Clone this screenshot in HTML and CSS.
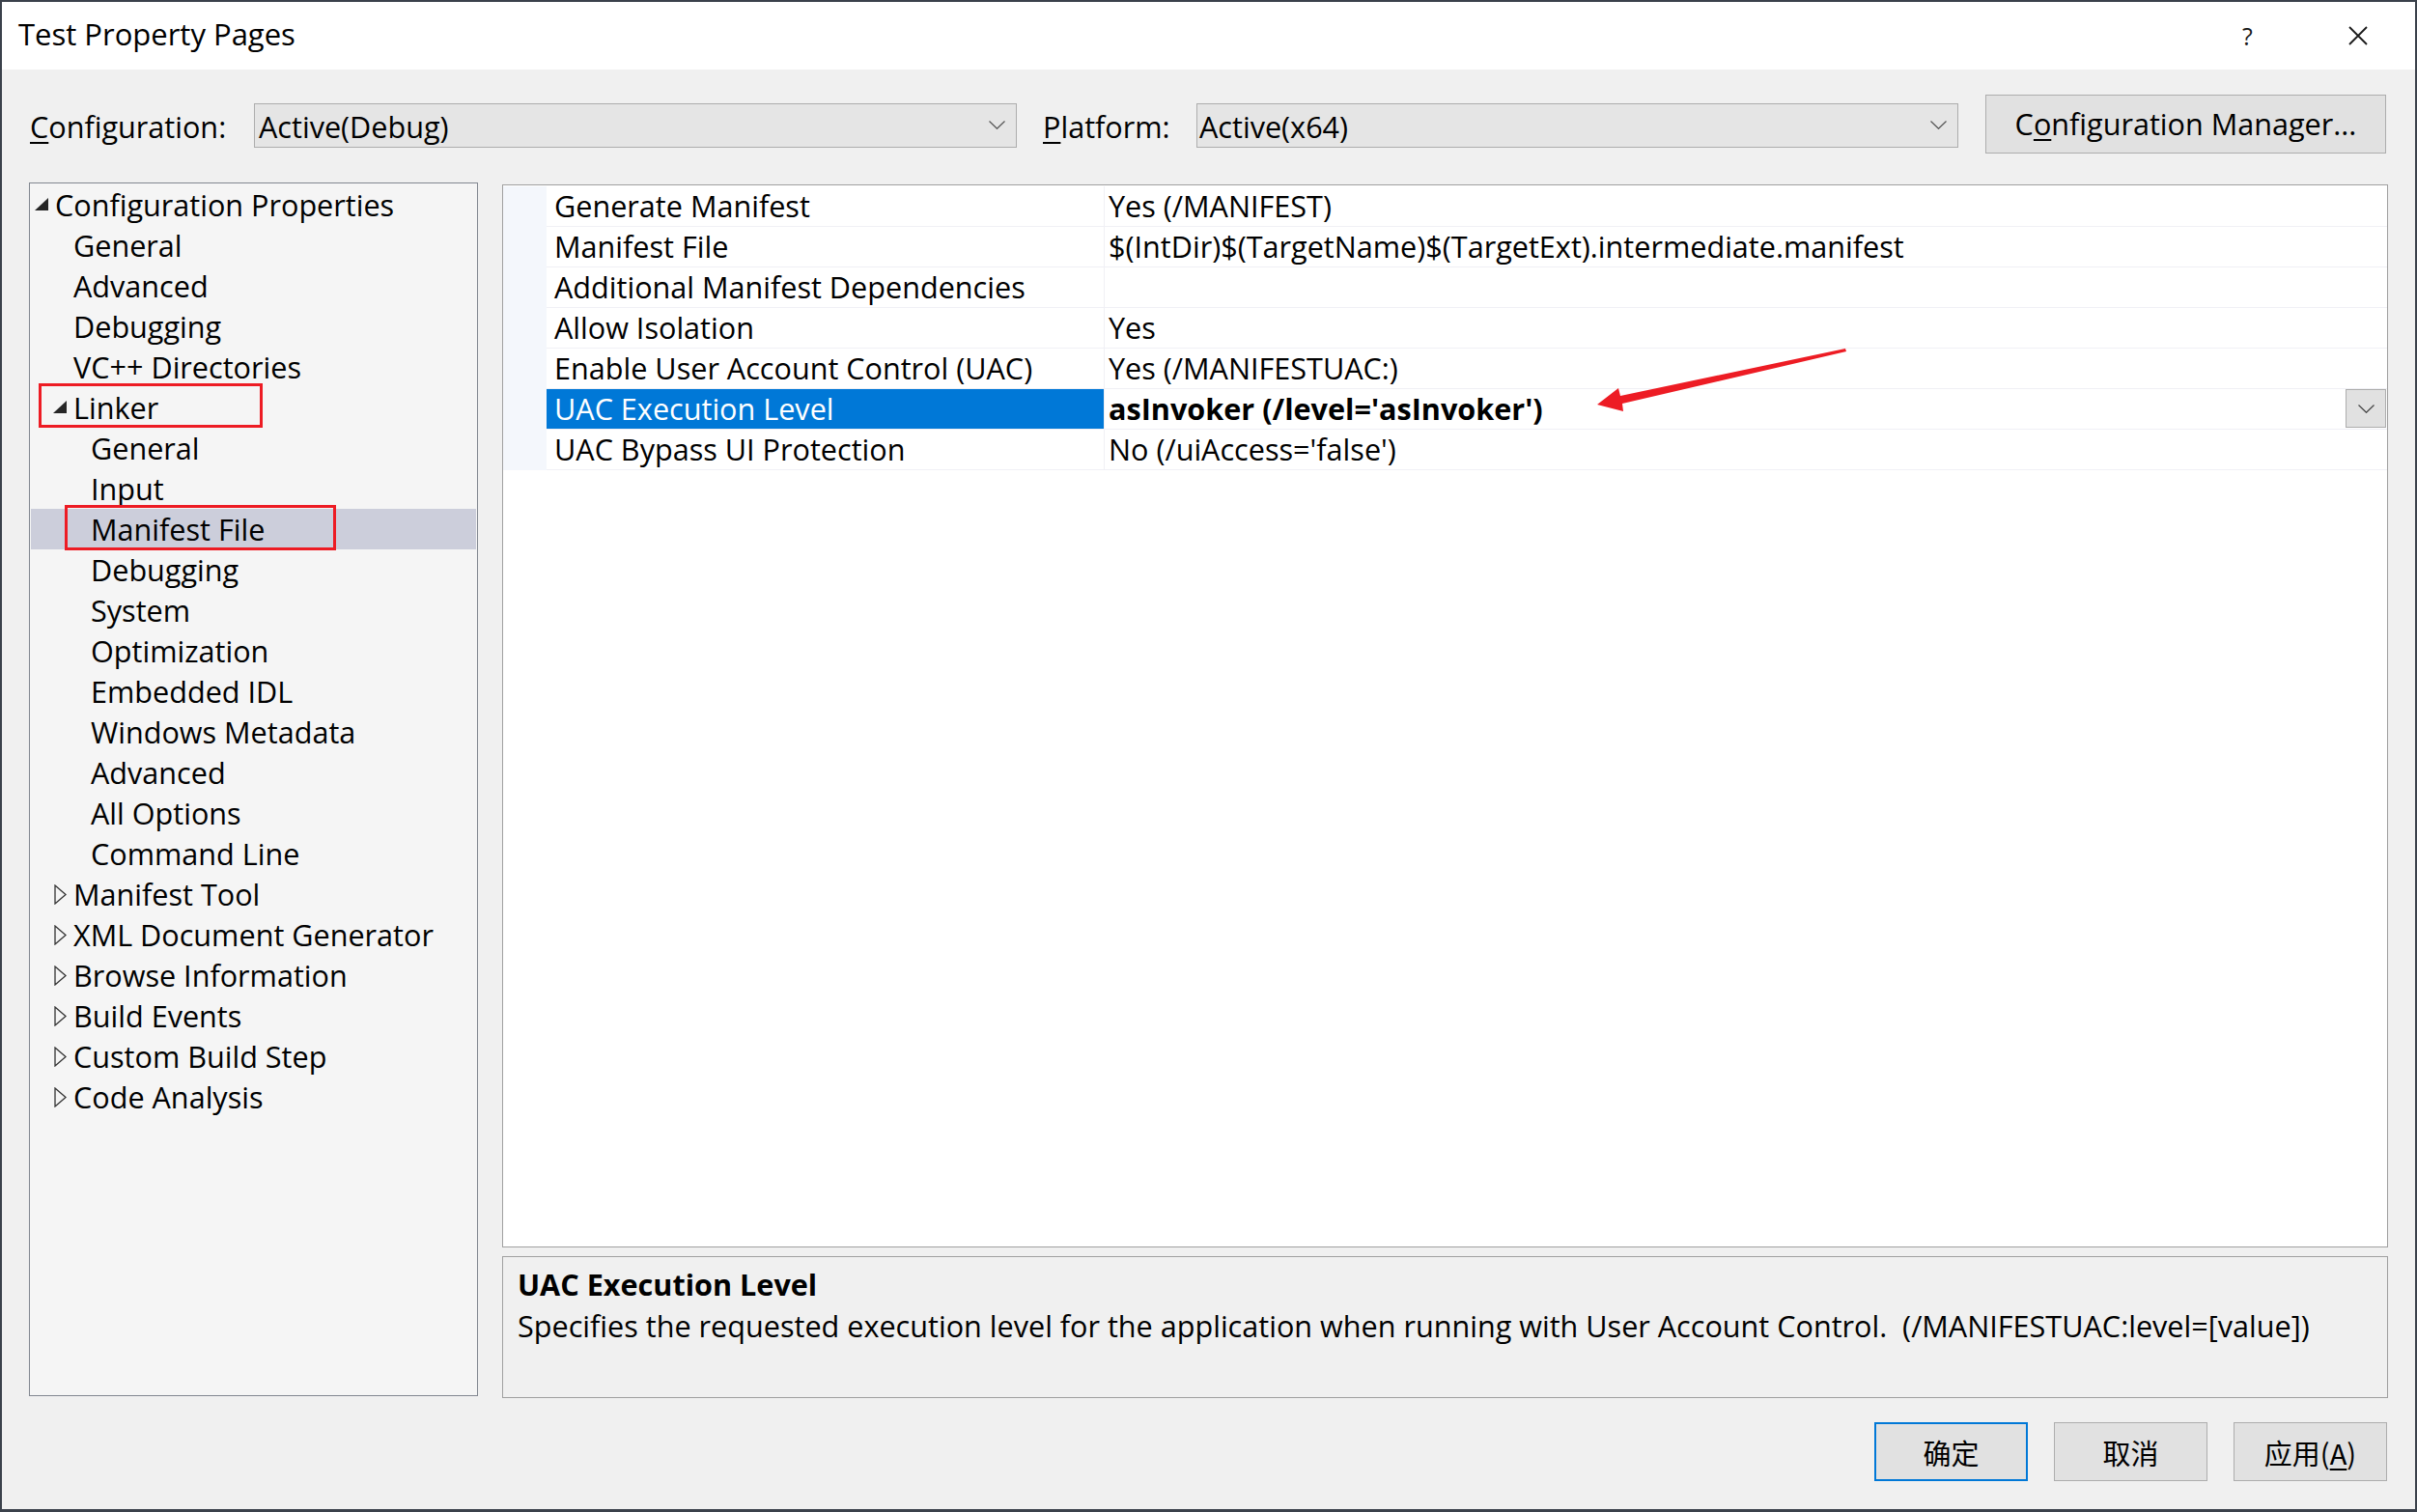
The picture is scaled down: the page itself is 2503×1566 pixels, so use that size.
FILE: index.html
```html
<!DOCTYPE html>
<html lang="en">
<head>
<meta charset="utf-8">
<title>Test Property Pages</title>
<link rel="stylesheet" href="styles.css">
</head>
<body>
<div class="window">
  <div class="titlebar">
    <span class="title">Test Property Pages</span>
    <span class="help">?</span>
    <svg class="close" width="20" height="20" viewBox="0 0 20 20"><path d="M1 1 L19 19 M19 1 L1 19" stroke="#1a1a1a" stroke-width="1.8" fill="none"/></svg>
  </div>

  <div class="config-row">
    <span class="label cfg-label"><u>C</u>onfiguration:</span>
    <div class="combo combo-cfg"><span>Active(Debug)</span><svg class="chev" width="17" height="9" viewBox="0 0 17 9"><path d="M0.5 0.5 L8.5 8.3 L16.5 0.5" stroke="#555" stroke-width="1.2" fill="none"/></svg></div>
    <span class="label plat-label"><u>P</u>latform:</span>
    <div class="combo combo-plat"><span>Active(x64)</span><svg class="chev" width="17" height="9" viewBox="0 0 17 9"><path d="M0.5 0.5 L8.5 8.3 L16.5 0.5" stroke="#555" stroke-width="1.2" fill="none"/></svg></div>
    <div class="cm-btn">C<u>o</u>nfiguration Manager...</div>
  </div>

  <div class="main">
    <div class="tree">
      <div class="node l0"><span class="twisty"><svg class="tri-open" width="14" height="13" viewBox="0 0 14 13"><polygon points="14,0 14,13 0,13" fill="#262626"/></svg></span>Configuration Properties</div>
      <div class="node l1"><span class="twisty"></span>General</div>
      <div class="node l1"><span class="twisty"></span>Advanced</div>
      <div class="node l1"><span class="twisty"></span>Debugging</div>
      <div class="node l1"><span class="twisty"></span>VC++ Directories</div>
      <div class="node l1"><span class="twisty"><svg class="tri-open" width="14" height="13" viewBox="0 0 14 13"><polygon points="14,0 14,13 0,13" fill="#262626"/></svg></span>Linker</div>
      <div class="node l2"><span class="twisty"></span>General</div>
      <div class="node l2"><span class="twisty"></span>Input</div>
      <div class="node l2 selected"><span class="twisty"></span>Manifest File</div>
      <div class="node l2"><span class="twisty"></span>Debugging</div>
      <div class="node l2"><span class="twisty"></span>System</div>
      <div class="node l2"><span class="twisty"></span>Optimization</div>
      <div class="node l2"><span class="twisty"></span>Embedded IDL</div>
      <div class="node l2"><span class="twisty"></span>Windows Metadata</div>
      <div class="node l2"><span class="twisty"></span>Advanced</div>
      <div class="node l2"><span class="twisty"></span>All Options</div>
      <div class="node l2"><span class="twisty"></span>Command Line</div>
      <div class="node l1"><span class="twisty"><svg class="tri-closed" width="13" height="21" viewBox="0 0 13 21"><polygon points="1,1 1,20 12,10.5" fill="none" stroke="#333" stroke-width="1.3"/></svg></span>Manifest Tool</div>
      <div class="node l1"><span class="twisty"><svg class="tri-closed" width="13" height="21" viewBox="0 0 13 21"><polygon points="1,1 1,20 12,10.5" fill="none" stroke="#333" stroke-width="1.3"/></svg></span>XML Document Generator</div>
      <div class="node l1"><span class="twisty"><svg class="tri-closed" width="13" height="21" viewBox="0 0 13 21"><polygon points="1,1 1,20 12,10.5" fill="none" stroke="#333" stroke-width="1.3"/></svg></span>Browse Information</div>
      <div class="node l1"><span class="twisty"><svg class="tri-closed" width="13" height="21" viewBox="0 0 13 21"><polygon points="1,1 1,20 12,10.5" fill="none" stroke="#333" stroke-width="1.3"/></svg></span>Build Events</div>
      <div class="node l1"><span class="twisty"><svg class="tri-closed" width="13" height="21" viewBox="0 0 13 21"><polygon points="1,1 1,20 12,10.5" fill="none" stroke="#333" stroke-width="1.3"/></svg></span>Custom Build Step</div>
      <div class="node l1"><span class="twisty"><svg class="tri-closed" width="13" height="21" viewBox="0 0 13 21"><polygon points="1,1 1,20 12,10.5" fill="none" stroke="#333" stroke-width="1.3"/></svg></span>Code Analysis</div>

      <div class="mark mark-linker"></div>
      <div class="mark mark-manifest"></div>
    </div>

    <div class="right">
      <div class="grid">
        <div class="prow"><div class="gut"></div><div class="pname">Generate Manifest</div><div class="pval">Yes (/MANIFEST)</div></div>
        <div class="prow"><div class="gut"></div><div class="pname">Manifest File</div><div class="pval">$(IntDir)$(TargetName)$(TargetExt).intermediate.manifest</div></div>
        <div class="prow"><div class="gut"></div><div class="pname">Additional Manifest Dependencies</div><div class="pval"></div></div>
        <div class="prow"><div class="gut"></div><div class="pname">Allow Isolation</div><div class="pval">Yes</div></div>
        <div class="prow"><div class="gut"></div><div class="pname">Enable User Account Control (UAC)</div><div class="pval">Yes (/MANIFESTUAC:)</div></div>
        <div class="prow sel"><div class="gut"></div><div class="pname">UAC Execution Level</div><div class="pval"><b>asInvoker (/level='asInvoker')</b><span class="dd"><svg width="17" height="9" viewBox="0 0 17 9"><path d="M0.5 0.5 L8.5 8.3 L16.5 0.5" stroke="#444" stroke-width="1.2" fill="none"/></svg></span></div></div>
        <div class="prow"><div class="gut"></div><div class="pname">UAC Bypass UI Protection</div><div class="pval">No (/uiAccess='false')</div></div>
      </div>
      <div class="desc">
        <div class="desc-title">UAC Execution Level</div>
        <div class="desc-text">Specifies the requested execution level for the application when running with User Account Control.&nbsp; (/MANIFESTUAC:level=[value])</div>
      </div>
    </div>
  </div>

  <div class="buttons">
    <div class="btn btn-ok">确定</div>
    <div class="btn">取消</div>
    <div class="btn">应用(<u>A</u>)</div>
  </div>

  <svg class="arrow" width="290" height="90" viewBox="0 0 290 90"><polygon points="14,69 36,52 38,60 271,11 272,14 40,68 41,76" fill="#ed1c24"/></svg>
</div>
</body>
</html>
```
FILE: styles.css
```css
html, body {
  margin: 0;
  padding: 0;
  width: 2503px;
  height: 1566px;
  overflow: hidden;
  background: #3b414b;
}

.window {
  position: relative;
  box-sizing: border-box;
  width: 2503px;
  height: 1566px;
  border: 2px solid #3b414b;
  border-bottom-width: 3px;
  background: #f0f0f0;
  display: flex;
  flex-direction: column;
  font-family: "Open Sans", "Noto Sans", "Noto Sans CJK SC", sans-serif;
  font-size: 30.6px;
  color: #000;
}

/* title bar */
.titlebar {
  box-sizing: border-box;
  height: 70px;
  flex: none;
  background: #fff;
  display: flex;
  align-items: center;
  padding-left: 17px;
  padding-right: 49px;
  padding-bottom: 5px;
}
.title {
  font-size: 31px;
}
.help {
  margin-left: auto;
  font-size: 25px;
  width: 12px;
  margin-right: 98px;
  color: #1a1a1a;
  padding-top: 5px;
}
.close {
  display: block;
  margin-top: 5px;
}

/* configuration row */
.config-row {
  flex: none;
  height: 61px;
  margin-top: 26px;
  padding-left: 29px;
  display: flex;
  align-items: center;
}
.label {
  flex: none;
  white-space: nowrap;
  padding-top: 4px;
}
.label u, .cm-btn u, .btn u {
  text-underline-offset: 4px;
  text-decoration-thickness: 2px;
}
.cfg-label { width: 232px; }
.plat-label { width: 159px; }
.combo {
  flex: none;
  box-sizing: border-box;
  height: 46px;
  border: 1px solid #adadad;
  background: #e5e5e5;
  display: flex;
  align-items: center;
  padding-left: 4px;
  padding-right: 11px;
  margin-top: 2px;
}
.combo span {
  padding-top: 3px;
}
.combo .chev {
  margin-left: auto;
  display: block;
}
.combo-cfg { width: 790px; margin-right: 27px; }
.combo-plat { width: 789px; margin-right: 28px; padding-left: 2px; }
.cm-btn {
  flex: none;
  box-sizing: border-box;
  width: 415px;
  height: 61px;
  border: 1px solid #adadad;
  background: #e1e1e1;
  display: flex;
  align-items: center;
  justify-content: center;
  padding-bottom: 2px;
}

/* main area */
.main {
  flex: none;
  display: flex;
  gap: 25px;
  margin-top: 30px;
  padding-left: 28px;
}
.tree {
  position: relative;
  box-sizing: border-box;
  width: 465px;
  height: 1257px;
  border: 1px solid #828790;
  background: #f5f5f5;
  padding-top: 1px;
}
.node {
  height: 42px;
  line-height: 42px;
  display: flex;
  align-items: center;
  white-space: nowrap;
  padding-left: 2px;
}
.node.l1 { padding-left: 21px; }
.node.l2 { padding-left: 39px; }
.node.selected {
  background: #cccedb;
  margin: 0 1px;
  padding-left: 38px;
}
.twisty {
  flex: none;
  width: 24px;
  height: 42px;
  display: flex;
  align-items: center;
}
.tri-open { margin-left: 3px; display: block; margin-top: -2px; }
.tri-closed { margin-left: 4px; display: block; }

.mark {
  position: absolute;
  box-sizing: border-box;
  border: 3px solid #ed1c24;
}
.mark-linker {
  left: 9px;
  top: 207px;
  width: 232px;
  height: 46px;
}
.mark-manifest {
  left: 36px;
  top: 333px;
  width: 281px;
  height: 47px;
}

.right {
  display: flex;
  flex-direction: column;
  width: 1953px;
  margin-top: 2px;
}
.grid {
  box-sizing: border-box;
  height: 1101px;
  border: 1px solid #a0a0a0;
  background: #fff;
  padding-top: 1px;
}
.prow {
  display: flex;
  height: 42px;
}
.gut {
  flex: none;
  width: 45px;
  background: #f4f7fc;
}
.pname {
  flex: none;
  box-sizing: border-box;
  width: 578px;
  padding-left: 8px;
  line-height: 41px;
  border-bottom: 1px solid #f0f0f5;
  border-right: 1px solid #f0f0f5;
  white-space: nowrap;
}
.pval {
  flex: 1;
  box-sizing: border-box;
  padding-left: 4px;
  line-height: 41px;
  border-bottom: 1px solid #f0f0f5;
  display: flex;
  white-space: nowrap;
}
.prow.sel .pname {
  background: #0078d7;
  color: #fff;
}
.pval b {
  font-weight: 700;
}
.dd {
  margin-left: auto;
  margin-right: 1px;
  box-sizing: border-box;
  width: 42px;
  height: 40px;
  border: 1px solid #adadad;
  background: #e1e1e1;
  display: flex;
  align-items: center;
  justify-content: center;
}
.dd svg { display: block; }

.desc {
  box-sizing: border-box;
  height: 147px;
  margin-top: 9px;
  border: 1px solid #a0a0a0;
  background: #f0f0f0;
  padding: 7px 15px 0 15px;
}
.desc-title {
  font-weight: 700;
  line-height: 42px;
}
.desc-text {
  line-height: 44px;
  white-space: nowrap;
}

/* bottom buttons */
.buttons {
  flex: none;
  display: flex;
  justify-content: flex-end;
  gap: 27px;
  margin-top: 25px;
  padding-right: 29px;
}
.btn {
  box-sizing: border-box;
  width: 159px;
  height: 61px;
  border: 1px solid #adadad;
  background: #e1e1e1;
  display: flex;
  align-items: center;
  justify-content: center;
  font-family: "Noto Sans CJK SC", sans-serif;
  font-size: 29px;
}
.btn-ok {
  border: 2px solid #0078d7;
}

.arrow {
  position: absolute;
  left: 1638px;
  top: 348px;
  display: block;
}
```
